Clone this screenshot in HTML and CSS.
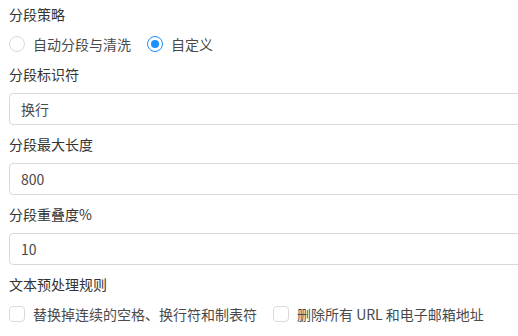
FILE: index.html
```html
<!DOCTYPE html>
<html lang="zh-CN">
<head>
    <meta charset="UTF-8">
    <title>分段设置</title>
    <link rel="stylesheet" href="styles.css">
</head>
<body>
<form class="settings">
    <div class="field-label">分段策略</div>
    <div class="option-row">
        <label class="radio">
            <input type="radio" name="mode" value="auto">
            <span class="radio-mark"></span>
            <span>自动分段与清洗</span>
        </label>
        <label class="radio">
            <input type="radio" name="mode" value="custom" checked>
            <span class="radio-mark"></span>
            <span>自定义</span>
        </label>
    </div>

    <div class="field-label">分段标识符</div>
    <input class="text-input" type="text" value="换行">

    <div class="field-label">分段最大长度</div>
    <input class="text-input" type="text" value="800">

    <div class="field-label">分段重叠度%</div>
    <input class="text-input" type="text" value="10">

    <div class="field-label">文本预处理规则</div>
    <div class="option-row">
        <label class="checkbox">
            <input type="checkbox">
            <span class="check-mark"></span>
            <span>替换掉连续的空格、换行符和制表符</span>
        </label>
        <label class="checkbox">
            <input type="checkbox">
            <span class="check-mark"></span>
            <span>删除所有 URL 和电子邮箱地址</span>
        </label>
    </div>
</form>
</body>
</html>
```

FILE: styles.css
```css
body {
    margin: 0;
    padding: 3px 0 0 9px;
    overflow: hidden;
    background: #fff;
    font-family: "Noto Sans CJK SC", "Liberation Sans", sans-serif;
    font-size: 14px;
    color: #333;
}
.settings {
    display: flex;
    flex-direction: column;
    gap: 8px;
}
.field-label {
    line-height: 22px;
    height: 22px;
}
.option-row {
    display: flex;
    gap: 16px;
    height: 22px;
    align-items: center;
}
.radio, .checkbox {
    display: flex;
    align-items: center;
    gap: 8px;
    line-height: 22px;
    color: #4a4a4a;
}
.radio input, .checkbox input {
    display: none;
}
.radio-mark {
    width: 16px;
    height: 16px;
    box-sizing: border-box;
    border: 1px solid #d9d9d9;
    border-radius: 50%;
    position: relative;
}
.radio input:checked + .radio-mark {
    border-color: #1890ff;
}
.radio input:checked + .radio-mark::after {
    content: "";
    position: absolute;
    left: 3px;
    top: 3px;
    width: 8px;
    height: 8px;
    border-radius: 50%;
    background: #1890ff;
}
.check-mark {
    width: 16px;
    height: 16px;
    box-sizing: border-box;
    border: 1px solid #d9d9d9;
    border-radius: 4px;
}
.text-input {
    width: 560px;
    height: 32px;
    box-sizing: border-box;
    margin: 0;
    padding: 0 11px;
    border: 1px solid #d9d9d9;
    border-radius: 4px;
    font-family: inherit;
    font-size: 14px;
    color: #4a4a4a;
    outline: none;
}
```
